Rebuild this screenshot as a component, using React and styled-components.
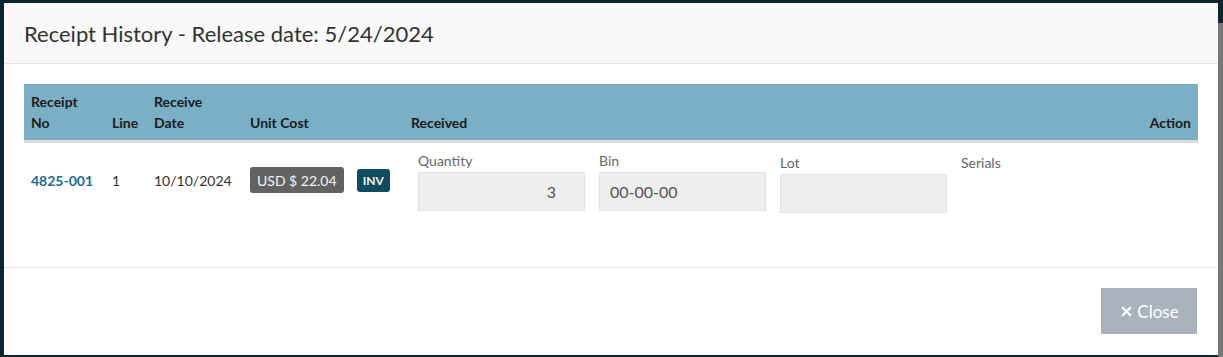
import React from "react";
import styled, { createGlobalStyle } from "styled-components";
import { X } from "lucide-react";

const GlobalStyle = createGlobalStyle`
  html, body {
    margin: 0;
    padding: 0;
    background: #0c2630;
    font-family: Lato, "Noto Sans", sans-serif;
  }
`;

const Page = styled.div`
  display: flex;
  width: 1223px;
  height: 357px;
  padding: 3px 0 0 4px;
  box-sizing: border-box;
  overflow: hidden;
`;

const Modal = styled.div`
  width: 1214px;
  height: 352px;
  background: #fff;
  display: flex;
  flex-direction: column;
`;

const ScrollStrip = styled.div`
  flex: 1;
  margin-top: -3px;
  background: linear-gradient(#0c2630 0 23px, #787878 23px);
`;

const Header = styled.div`
  height: 60px;
  padding: 0 20px;
  display: flex;
  align-items: center;
  background: #f9f9f9;
  border-bottom: 1px solid #e5e5e5;
`;

const Title = styled.h4`
  margin: 0;
  font-size: 22px;
  font-weight: 400;
  color: #333;
`;

const Body = styled.div`
  padding: 20px 20px 0;
  height: 183px;
  border-bottom: 1px solid #e5e5e5;
`;

const cols = "81px 42px 96px 161px 1fr auto";

const HeadRow = styled.div`
  display: grid;
  grid-template-columns: ${cols};
  align-items: end;
  background: #7aafc6;
  border-bottom: 3px solid #dcdcdc;
  height: 56px;
  box-sizing: content-box;
`;

const Th = styled.div`
  padding: 7px;
  font-size: 14px;
  line-height: 21px;
  font-weight: 700;
  color: #1b1b1b;
  text-align: ${(p) => (p.$right ? "right" : "left")};
`;

const Row = styled.div`
  display: grid;
  grid-template-columns: ${cols};
  align-items: start;
`;

const Td = styled.div`
  padding: ${(p) => p.$pad || "27px 7px 7px"};
  font-size: 14px;
  line-height: 21px;
  color: #333;
  display: flex;
  align-items: center;
  gap: 13px;
  white-space: nowrap;
`;

const Link = styled.a`
  color: #1b6a98;
  font-weight: 700;
  text-decoration: none;
`;

const Badge = styled.span`
  display: inline-flex;
  align-items: center;
  justify-content: center;
  flex-shrink: 0;
  white-space: nowrap;
  border-radius: 3px;
  color: #f5f5f5;
  background: ${(p) => p.$bg};
  height: ${(p) => p.$h}px;
  padding: 0 ${(p) => p.$px}px;
  font-size: ${(p) => p.$fs}px;
  font-weight: ${(p) => p.$fw};
`;

const Fields = styled.div`
  display: grid;
  grid-template-columns: repeat(4, 181px);
  padding: 8px 0 0 7px;
`;

const Field = styled.div`
  padding: 0 7px;
  margin-top: ${(p) => p.$shift || 0}px;
`;

const Label = styled.div`
  font-size: 14px;
  line-height: 20px;
  color: #666;
  margin-bottom: 1px;
`;

const Input = styled.div`
  height: 37px;
  box-sizing: content-box;
  background: #eeeeee;
  border: 1px solid #e2e2e2;
  display: flex;
  align-items: center;
  justify-content: ${(p) => (p.$right ? "flex-end" : "flex-start")};
  padding: 0 ${(p) => (p.$right ? 28 : 10)}px 0 10px;
  font-size: 16px;
  color: #555;
`;

const Footer = styled.div`
  flex: 1;
  display: flex;
  justify-content: flex-end;
  align-items: flex-start;
  padding: 20px 21px 0 20px;
`;

const CloseButton = styled.button`
  width: 96px;
  height: 46px;
  border: none;
  border-radius: 0;
  background: #a9b2bd;
  color: #fff;
  font-family: inherit;
  font-size: 17px;
  display: flex;
  align-items: center;
  justify-content: center;
  gap: 3px;
`;

export default function App() {
  return (
    <>
      <GlobalStyle />
      <Page>
        <Modal>
          <Header>
            <Title>Receipt History - Release date: 5/24/2024</Title>
          </Header>
          <Body>
            <HeadRow>
              <Th>
                Receipt
                <br />
                No
              </Th>
              <Th>Line</Th>
              <Th>
                Receive
                <br />
                Date
              </Th>
              <Th>Unit Cost</Th>
              <Th>Received</Th>
              <Th $right>Action</Th>
            </HeadRow>
            <Row>
              <Td>
                <Link href="#">4825-001</Link>
              </Td>
              <Td>1</Td>
              <Td>10/10/2024</Td>
              <Td $pad="24px 7px 7px">
                <Badge $bg="#626262" $h={26} $px={7} $fs={14} $fw={400}>
                  USD $ 22.04
                </Badge>
                <Badge $bg="#0f4c5f" $h={23} $px={6} $fs={12} $fw={700}>
                  INV
                </Badge>
              </Td>
              <Fields>
                <Field>
                  <Label>Quantity</Label>
                  <Input $right>3</Input>
                </Field>
                <Field>
                  <Label>Bin</Label>
                  <Input>00-00-00</Input>
                </Field>
                <Field $shift={2}>
                  <Label>Lot</Label>
                  <Input />
                </Field>
                <Field $shift={2}>
                  <Label>Serials</Label>
                </Field>
              </Fields>
              <Td />
            </Row>
          </Body>
          <Footer>
            <CloseButton>
              <X size={15} strokeWidth={3.5} />
              Close
            </CloseButton>
          </Footer>
        </Modal>
        <ScrollStrip />
      </Page>
    </>
  );
}
